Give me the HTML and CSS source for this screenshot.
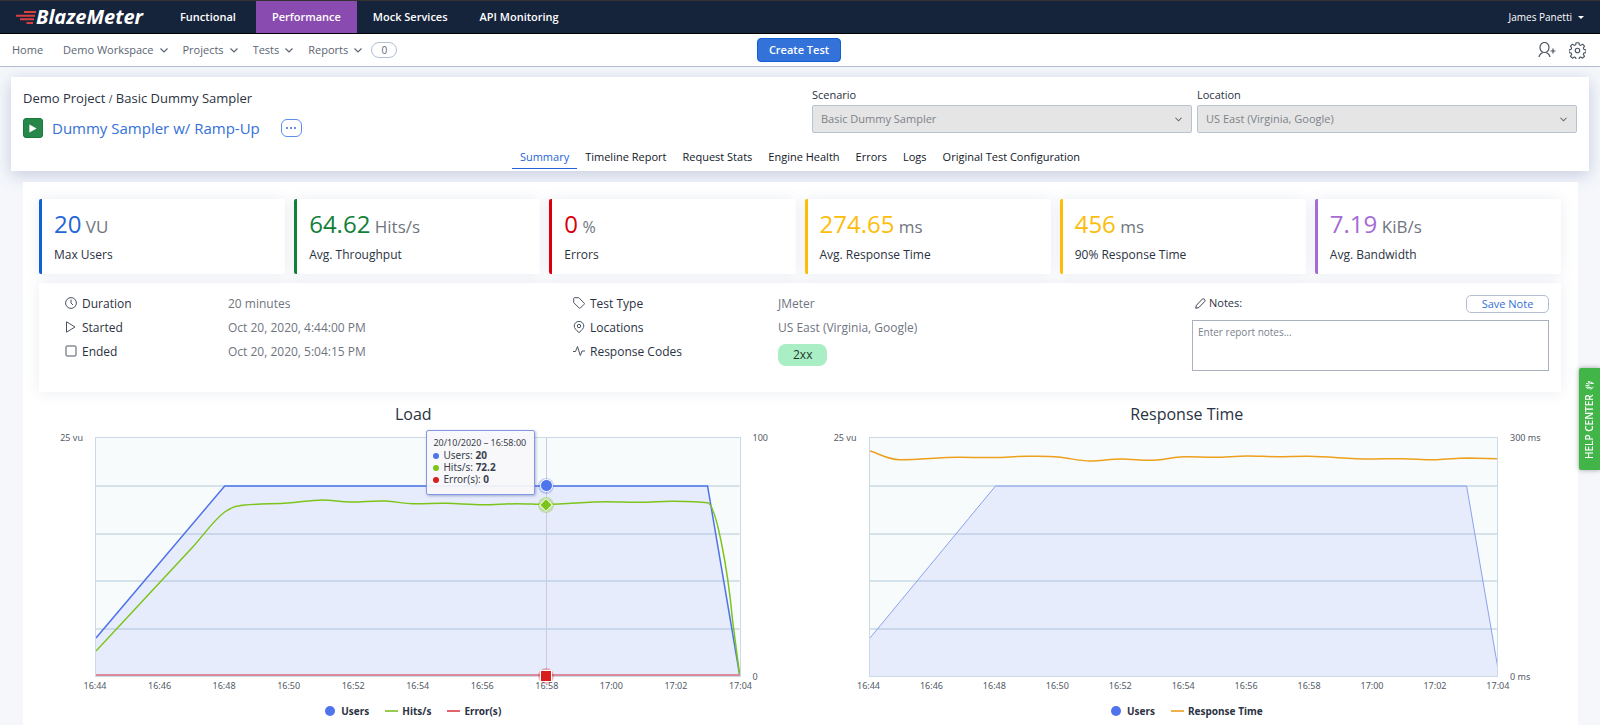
FILE: index.html
```html
<!DOCTYPE html>
<html lang="en">
<head>
    <meta charset="UTF-8">
    <meta name="viewport" content="width=device-width, initial-scale=1.0">
    <title>BlazeMeter - Dummy Sampler w/ Ramp-Up</title>
    <link rel="stylesheet" href="styles.css">
</head>
<body>
    <header class="topbar">
        <a href="#" class="logo">
            <svg class="logo-lines" viewBox="0 0 20 14" aria-hidden="true">
                <path d="M8 2H20M0 5.700H19M4 9.300H18M10.500 13H17" />
            </svg>
            <span>BlazeMeter</span>
        </a>
        <nav class="products">
            <a href="#">Functional</a>
            <a href="#" class="active">Performance</a>
            <a href="#">Mock Services</a>
            <a href="#">API Monitoring</a>
        </nav>
        <button class="user-menu" type="button">James Panetti <span class="caret"></span></button>
    </header>

    <div class="subnav">
        <nav class="subnav-links">
            <a href="#" class="home">Home</a>
            <a href="#">Demo Workspace <svg class="chevron" viewBox="0 0 8 5"><path d="M0.5 0.5L4 4L7.5 0.5" /></svg></a>
            <a href="#">Projects <svg class="chevron" viewBox="0 0 8 5"><path d="M0.5 0.5L4 4L7.5 0.5" /></svg></a>
            <a href="#">Tests <svg class="chevron" viewBox="0 0 8 5"><path d="M0.5 0.5L4 4L7.5 0.5" /></svg></a>
            <a href="#">Reports <svg class="chevron" viewBox="0 0 8 5"><path d="M0.5 0.5L4 4L7.5 0.5" /></svg></a>
            <span class="count">0</span>
        </nav>
        <button class="create-test" type="button">Create Test</button>
        <div class="subnav-tools">
            <button class="icon-button" type="button" aria-label="Invite user">
                <svg class="icon-invite" viewBox="0 0 18 16">
                    <ellipse cx="6.5" cy="5.5" rx="4.5" ry="5" />
                    <path d="M1 15C1.3 12.6 2.6 11.6 4.6 10.8M12 15C11.7 12.6 10.4 11.6 8.4 10.8M12.5 9H17.5M15 6.5V11.5" />
                </svg>
            </button>
            <button class="icon-button" type="button" aria-label="Settings">
                <svg class="icon-gear" viewBox="0 0 24 24">
                    <circle cx="12" cy="12" r="3.2" />
                    <path d="M10 1.5h4l.6 3 1.9.8 2.6-1.7 2.8 2.8-1.7 2.6.8 1.9 3 .6v4l-3 .6-.8 1.9 1.7 2.6-2.8 2.8-2.6-1.7-1.9.8-.6 3h-4l-.6-3-1.9-.8-2.6 1.7-2.8-2.8 1.7-2.6-.8-1.9-3-.6v-4l3-.6.8-1.9-1.7-2.6 2.8-2.8 2.6 1.7 1.9-.8z" transform="translate(0 -0.5)" />
                </svg>
            </button>
        </div>
    </div>

    <section class="report-header">
        <div class="report-top">
            <div class="report-name">
                <p class="breadcrumb"><a href="#">Demo Project</a> <small>/</small> <a href="#">Basic Dummy Sampler</a></p>
                <div class="title-row">
                    <button class="run" type="button" aria-label="Run test">
                        <svg viewBox="0 0 10 10"><path d="M0.5 0L9.5 5L0.5 10Z" /></svg>
                    </button>
                    <h1>Dummy Sampler w/ Ramp-Up</h1>
                    <button class="more" type="button" aria-label="More actions"><i></i><i></i><i></i></button>
                </div>
            </div>
            <div class="filters">
                <div class="filter">
                    <label for="scenario">Scenario</label>
                    <div class="select-box">
                        <select id="scenario" disabled><option>Basic Dummy Sampler</option></select>
                        <svg class="chevron" viewBox="0 0 8 5"><path d="M0.5 0.5L4 4L7.5 0.5" /></svg>
                    </div>
                </div>
                <div class="filter">
                    <label for="location">Location</label>
                    <div class="select-box">
                        <select id="location" disabled><option>US East (Virginia, Google)</option></select>
                        <svg class="chevron" viewBox="0 0 8 5"><path d="M0.5 0.5L4 4L7.5 0.5" /></svg>
                    </div>
                </div>
            </div>
        </div>
        <nav class="tabs">
            <a href="#" class="active">Summary</a>
            <a href="#">Timeline Report</a>
            <a href="#">Request Stats</a>
            <a href="#">Engine Health</a>
            <a href="#">Errors</a>
            <a href="#">Logs</a>
            <a href="#">Original Test Configuration</a>
        </nav>
    </section>

    <main class="report">
        <div class="stats">
            <div class="stat-box blue">
                <p class="value"><b>20</b> VU</p>
                <p class="label">Max Users</p>
            </div>
            <div class="stat-box green">
                <p class="value"><b>64.62</b> Hits/s</p>
                <p class="label">Avg. Throughput</p>
            </div>
            <div class="stat-box red">
                <p class="value"><b>0</b> <small>%</small></p>
                <p class="label">Errors</p>
            </div>
            <div class="stat-box yellow">
                <p class="value"><b>274.65</b> ms</p>
                <p class="label">Avg. Response Time</p>
            </div>
            <div class="stat-box yellow">
                <p class="value"><b>456</b> ms</p>
                <p class="label">90% Response Time</p>
            </div>
            <div class="stat-box purple">
                <p class="value"><b>7.19</b> KiB/s</p>
                <p class="label">Avg. Bandwidth</p>
            </div>
        </div>

        <div class="details">
            <dl class="times">
                <dt><svg viewBox="0 0 12 12"><circle cx="6" cy="6" r="5.4" /><path d="M6 2.6V6L8 8" /></svg>Duration</dt>
                <dd>20 minutes</dd>
                <dt><svg viewBox="0 0 12 12"><path d="M1.5 0.8L10 6L1.5 11.2Z" /></svg>Started</dt>
                <dd>Oct 20, 2020, 4:44:00 PM</dd>
                <dt><svg viewBox="0 0 12 12"><rect x="1" y="1" width="10" height="10" rx="1" /></svg>Ended</dt>
                <dd>Oct 20, 2020, 5:04:15 PM</dd>
            </dl>
            <dl class="setup">
                <dt><svg viewBox="0 0 12 12"><path d="M0.7 1.4L1.3 0.7H5.8L11.4 6.3Q11.6 6.8 11.2 7.2L7.3 11.1Q6.7 11.5 6.2 11.1L0.7 5.6Z" /></svg>Test Type</dt>
                <dd>JMeter</dd>
                <dt><svg viewBox="0 0 12 12"><path d="M6 11.6C3 9 1.2 7.2 1.2 5A4.8 4.6 0 0 1 10.8 5C10.8 7.2 9 9 6 11.6Z" /><circle cx="6" cy="5" r="1.7" /></svg>Locations</dt>
                <dd>US East (Virginia, Google)</dd>
                <dt><svg viewBox="0 0 12 12"><path d="M0 6.5H2.5L4.5 1.5L7.3 10.5L9 6H12" /></svg>Response Codes</dt>
                <dd><span class="code">2xx</span></dd>
            </dl>
            <div class="notes">
                <div class="notes-head">
                    <label for="notes">
                        <svg viewBox="0 0 12 12"><path d="M0.8 11.2L1.5 8L8 1.2Q9 0.3 10.2 1.3Q11.6 2.6 10.6 3.8L4.2 10.4Z" /></svg>Notes:
                    </label>
                    <button class="save-note" type="button">Save Note</button>
                </div>
                <textarea id="notes" placeholder="Enter report notes..."></textarea>
            </div>
        </div>

        <div class="charts">
            <section class="chart">
                <h2>Load</h2>
                <div class="chart-body load">
                    <div class="axis left"><span>25 vu</span></div>
                    <div class="plot">
                        <svg class="series" viewBox="0 0 645 238" preserveAspectRatio="none">
                            <path class="grid" d="M0 48H645M0 96H645M0 143H645M0 191H645" />
                            <path class="users-area" d="M0 200L129 48H613L645 226V238H0Z" />
                            <path class="users-line" d="M0 200L129 48H613L645 236" />
                            <path class="hits-line" d="M0 213C32 179 65 143 97 109C108 97 118 82 129 74C135 70 139 68 143 68C150 66 178 66 192 65C204 64.500 214 62 227 62C238 62 244 64 255 64C268 64 279 62.500 290 63C302 63.500 306 65.500 318 65.700C330 66 340 65 352 65.300C364 65.600 376 66.700 388 66.700C400 66.700 410 65.700 422 65.700C432 65.700 441 66.300 451 66.300C473 66.300 490 63.700 512 63.700C524 63.700 533 64.300 545 64.300C558 64.300 568 63 580 63.300C592 63.500 606 64 613 64.700C621 66 633 128 638 182L645 236" />
                        </svg>
                        <div class="errors-line"></div>
                        <div class="crosshair">
                            <i class="point users"></i>
                            <i class="point hits"></i>
                            <i class="point errors"></i>
                        </div>
                        <div class="tooltip">
                            <p class="date">20/10/2020 – 16:58:00</p>
                            <p><i class="dot blue"></i>Users: <b>20</b></p>
                            <p><i class="dot green"></i>Hits/s: <b>72.2</b></p>
                            <p><i class="dot red"></i>Error(s): <b>0</b></p>
                        </div>
                    </div>
                    <div class="axis right"><span>100</span><span>0</span></div>
                    <div class="times-axis">
                        <span>16:44</span><span>16:46</span><span>16:48</span><span>16:50</span><span>16:52</span><span>16:54</span><span>16:56</span><span>16:58</span><span>17:00</span><span>17:02</span><span>17:04</span>
                    </div>
                </div>
                <div class="legend">
                    <span><i class="key-dot"></i>Users</span>
                    <span><i class="key-line green"></i>Hits/s</span>
                    <span><i class="key-line red"></i>Error(s)</span>
                </div>
            </section>

            <section class="chart">
                <h2>Response Time</h2>
                <div class="chart-body response">
                    <div class="axis left"><span>25 vu</span></div>
                    <div class="plot">
                        <svg class="series" viewBox="0 0 630 238" preserveAspectRatio="none">
                            <path class="grid" d="M0 48H630M0 96H630M0 143H630M0 191H630" />
                            <path class="users-area" d="M0 200L126 48H599L630 228V238H0Z" />
                            <path class="users-line thin" d="M0 200L126 48H599L630 228" />
                            <path class="response-line" d="M0 13C10 16 18 21.700 30 21.700C52 21.700 68 19.300 90 19.300C102 19.300 113 19.700 125 19.500C137 19.300 147 18.300 159 18.300C170 18.300 179 18 189 19C200 20 210 23 221 23C232 23 241 21 252 21C264 21 274 22.800 285 22.300C296 21.800 304 19 315 18.700C326 18.400 336 19.500 347 19.300C358 19.100 368 18 379 18C390 18 398 18.700 409 18.700C420 18.700 429 18.200 440 18.300C462 18.500 480 21 502 21C514 21 523 20.500 535 20.700C547 20.900 557 21.900 569 21.700C580 21.500 588 20.200 599 20L630 20.700" />
                        </svg>
                    </div>
                    <div class="axis right"><span>300 ms</span><span>0 ms</span></div>
                    <div class="times-axis">
                        <span>16:44</span><span>16:46</span><span>16:48</span><span>16:50</span><span>16:52</span><span>16:54</span><span>16:56</span><span>16:58</span><span>17:00</span><span>17:02</span><span>17:04</span>
                    </div>
                </div>
                <div class="legend">
                    <span><i class="key-dot"></i>Users</span>
                    <span><i class="key-line orange"></i>Response Time</span>
                </div>
            </section>
        </div>
    </main>

    <button class="help-center" type="button">
        HELP CENTER
        <svg viewBox="0 0 10 10" aria-hidden="true"><path d="M3.300 9.500L0.800 6.200L1.600 5.600L3 6.800L1.800 2M3.200 5L3.200 0.800M5 4.800V0.500M6.500 5L7.300 1.200M7.300 6L9.200 3.200L9 6L7.200 9.500Z" /></svg>
    </button>
</body>
</html>
```

FILE: styles.css
```css
* {
    box-sizing: border-box;
}
body {
    font-family: 'Open Sans', sans-serif;
    font-size: 12px;
    line-height: 16px;
    margin: 0;
    min-height: 100vh;
    display: flex;
    flex-direction: column;
    background: #f5f7fb;
    color: #2b3242;
}
a {
    color: inherit;
    text-decoration: none;
}
p, h1, h2, dl, dd {
    margin: 0;
}
button, select, textarea {
    font: inherit;
}
button {
    cursor: pointer;
    padding: 0;
}
svg {
    fill: none;
    stroke: currentColor;
}
.chevron {
    width: 8px;
    height: 5px;
    overflow: visible;
    stroke-width: 1.2;
}

/* Top bar */
.topbar {
    display: flex;
    height: 34px;
    background: #15233b;
    border-top: 1px solid #333;
    border-bottom: 1px solid #000;
    color: white;
}
.logo {
    display: flex;
    align-items: center;
    width: 164px;
    padding-left: 16px;
    font-size: 20px;
    font-weight: 700;
    font-style: italic;
}
.logo-lines {
    width: 20px;
    height: 14px;
    stroke: #d9403f;
    stroke-width: 2;
}
.products {
    display: flex;
    flex: 1;
    font-size: 11px;
    font-weight: 600;
}
.products a {
    display: flex;
    align-items: center;
    padding: 0 16px;
}
.products a:first-child {
    margin-right: 4px;
}
.products .active {
    background: #8a4bb0;
}
.user-menu {
    display: flex;
    align-items: center;
    gap: 6px;
    margin-right: 16px;
    background: none;
    border: none;
    color: white;
    font-size: 10px;
    font-weight: 500;
}
.caret {
    border: 3px solid transparent;
    border-top-color: white;
    border-bottom: none;
}

/* Workspace navigation */
.subnav {
    display: grid;
    grid-template-columns: 1fr auto 1fr;
    align-items: center;
    height: 33px;
    padding: 0 14px 0 12px;
    background: white;
    border-bottom: 1px solid #b3bed0;
    color: #5b6573;
    font-size: 11px;
}
.subnav-links {
    display: flex;
    align-items: center;
    gap: 15px;
    font-weight: 500;
}
.subnav-links a {
    display: flex;
    align-items: center;
    gap: 6px;
}
.subnav-links .home {
    margin-right: 5px;
}
.count {
    width: 26px;
    height: 16px;
    margin-left: -6px;
    border: 1px solid #b3bed0;
    border-radius: 8px;
    font-size: 10px;
    line-height: 14px;
    text-align: center;
}
.create-test {
    width: 84px;
    height: 24px;
    background: #3272d9;
    border: 1px solid #0f5fd8;
    border-radius: 4px;
    color: white;
    font-weight: 600;
}
.subnav-tools {
    display: flex;
    justify-content: flex-end;
    align-items: center;
    gap: 13px;
}
.icon-button {
    display: flex;
    background: none;
    border: none;
    color: #4a5462;
}
.icon-invite {
    width: 18px;
    height: 16px;
    stroke-width: 1.2;
}
.icon-gear {
    width: 17px;
    height: 17px;
    stroke-width: 1.6;
    stroke-linejoin: round;
}

/* Report header */
.report-header {
    margin: 10px 11px 0;
    padding: 10px 12px 0;
    background: white;
    box-shadow: 0 4px 16px rgba(60, 80, 140, 0.25);
}
.report-top {
    display: flex;
    justify-content: space-between;
}
.breadcrumb {
    margin-top: 3px;
    font-size: 13px;
}
.breadcrumb small {
    font-size: 10px;
}
.title-row {
    display: flex;
    align-items: center;
    margin-top: 11px;
}
.run {
    display: flex;
    align-items: center;
    justify-content: center;
    width: 20px;
    height: 20px;
    margin-right: 9px;
    background: #27874a;
    border: 1px solid #167a3a;
    border-radius: 3px;
}
.run svg {
    width: 8px;
    height: 9px;
    fill: white;
    stroke: none;
}
h1 {
    font-size: 15px;
    line-height: 20px;
    font-weight: 400;
    color: #3470d8;
}
.more {
    display: flex;
    align-items: center;
    justify-content: center;
    gap: 2px;
    width: 21px;
    height: 18px;
    margin-left: 21px;
    background: white;
    border: 1px solid #5f8fe6;
    border-radius: 6px;
}
.more i {
    width: 2px;
    height: 2px;
    border-radius: 50%;
    background: #3470d8;
}
.filters {
    display: flex;
    gap: 5px;
    width: calc(50% - 12px);
}
.filter {
    flex: 1;
    font-size: 11px;
}
.filter label {
    display: block;
    margin-bottom: 2px;
}
.select-box {
    position: relative;
}
.select-box select {
    display: block;
    width: 100%;
    height: 28px;
    padding: 0 8px;
    appearance: none;
    background: #e5e5e5;
    border: 1px solid #b9c4d2;
    border-radius: 2px;
    color: #7d8289;
    opacity: 1;
}
.select-box .chevron {
    position: absolute;
    right: 10px;
    top: 12px;
    width: 7px;
    color: #5b6573;
}
.tabs {
    display: flex;
    justify-content: center;
    margin-top: 6px;
    padding-bottom: 2px;
    font-size: 11px;
    font-weight: 500;
    color: #111827;
}
.tabs a {
    padding: 5px 8px 3px;
    border-bottom: 1px solid transparent;
}
.tabs .active {
    color: #2466d8;
    border-color: #2466d8;
}

/* Report body */
.report {
    flex: 1;
    margin: 11px 22px 0 23px;
    padding: 17px 17px 0 16px;
    background: white;
}
.stats {
    display: grid;
    grid-template-columns: repeat(6, 1fr);
    gap: 9px;
}
.stat-box {
    height: 75px;
    padding: 12px;
    background: white;
    border-left: 3px solid;
    border-radius: 2px;
    box-shadow: 0 0 14px rgba(60, 80, 140, 0.1);
}
.stat-box .value {
    font-size: 17px;
    line-height: 26px;
    color: #6f7580;
}
.stat-box .value b {
    font-size: 24px;
    font-weight: 400;
}
.stat-box .value small {
    font-size: 16px;
    line-height: 16px;
}
.stat-box .label {
    margin-top: 7px;
    color: #2b3242;
}
.stat-box.blue {
    border-color: #0f5fd8;
}
.stat-box.blue b {
    color: #2466d8;
}
.stat-box.green {
    border-color: #117f38;
}
.stat-box.green b {
    color: #117f38;
}
.stat-box.red {
    border-color: #d9000a;
}
.stat-box.red b {
    color: #d9000a;
}
.stat-box.yellow {
    border-color: #fbbd08;
}
.stat-box.yellow b {
    color: #fbbd08;
}
.stat-box.purple {
    border-color: #a56bd6;
}
.stat-box.purple b {
    color: #a56bd6;
}

.details {
    display: flex;
    height: 109px;
    margin-top: 9px;
    padding: 12px 12px 0 26px;
    background: white;
    box-shadow: 0 0 14px rgba(60, 80, 140, 0.1);
}
.details dl {
    display: grid;
    align-content: start;
    grid-auto-rows: 24px;
    line-height: 18px;
}
.details dt {
    display: flex;
    gap: 5px;
}
.details dt svg {
    width: 12px;
    height: 12px;
    margin-top: 2px;
    color: #4a5462;
}
.details dd {
    color: #6f7580;
}
.details .times {
    width: 508px;
    grid-template-columns: 163px 1fr;
}
.details .setup {
    flex: 1;
    grid-template-columns: 205px 1fr;
}
.code {
    display: inline-block;
    padding: 2px 15px;
    margin-top: 1px;
    background: #a9eec4;
    border-radius: 8px;
    color: #1f3a2c;
}
.notes {
    width: 357px;
}
.notes-head {
    display: flex;
    justify-content: space-between;
    height: 25px;
    padding-left: 3px;
}
.notes-head label {
    display: flex;
    gap: 3px;
    font-size: 11px;
}
.notes-head label svg {
    width: 11px;
    height: 11px;
    margin-top: 3px;
}
.save-note {
    width: 83px;
    height: 18px;
    background: white;
    border: 1px solid #b3bed0;
    border-radius: 5px;
    color: #3470d8;
    font-size: 11px;
    line-height: 16px;
}
.notes textarea {
    display: block;
    width: 100%;
    height: 51px;
    padding: 3px 5px;
    border: 1px solid #a9b1be;
    resize: none;
    font-size: 10px;
}
.notes textarea::placeholder {
    color: #7a828e;
}

/* Charts */
.charts {
    display: flex;
    gap: 25px;
    padding-top: 11px;
}
.chart {
    flex: 1;
    padding-bottom: 4px;
}
.chart h2 {
    margin-bottom: 12px;
    font-size: 16px;
    line-height: 22px;
    font-weight: 400;
    text-align: center;
}
.chart-body {
    display: grid;
    grid-template-rows: 240px 20px;
    font-family: 'Noto Sans', sans-serif;
    font-size: 9px;
    color: #525a66;
}
.chart-body.load {
    grid-template-columns: 56px 1fr 47px;
}
.chart-body.response {
    grid-template-columns: 56px 1fr 63px;
}
.axis {
    display: flex;
    flex-direction: column;
    justify-content: space-between;
    margin: -7px 0 -8px;
}
.axis.left {
    align-items: flex-end;
    padding-right: 12px;
}
.axis.right {
    padding-left: 12px;
}
.plot {
    position: relative;
    border: 1px solid #cbdae6;
    background: #f8fbfc;
}
.series {
    display: block;
    position: absolute;
    width: 100%;
    height: 100%;
}
.series path {
    vector-effect: non-scaling-stroke;
}
.grid {
    stroke: #d6e2ea;
    stroke-width: 2;
}
.users-area {
    fill: rgba(90, 110, 255, 0.1);
    stroke: none;
}
.users-line {
    stroke: #4f74e8;
    stroke-width: 1.5;
}
.users-line.thin {
    stroke: #8aa2ef;
    stroke-width: 1;
}
.hits-line {
    stroke: #7cc41a;
    stroke-width: 1.5;
}
.response-line {
    stroke: #eca01c;
    stroke-width: 1.5;
}
.errors-line {
    position: absolute;
    left: 0;
    right: 0;
    bottom: 0;
    height: 2px;
    background: #dd8a9a;
}
.crosshair {
    position: absolute;
    left: 70%;
    top: 0;
    bottom: 0;
    width: 1px;
    background: #c9cddb;
}
.point {
    position: absolute;
    left: -8px;
    width: 16px;
    height: 16px;
    margin-top: -8px;
    border-radius: 50%;
    display: flex;
    align-items: center;
    justify-content: center;
}
.point::after {
    content: '';
    border: 1px solid white;
}
.point.users {
    top: 20%;
    background: rgba(79, 116, 236, 0.3);
}
.point.users::after {
    width: 11px;
    height: 11px;
    border-radius: 50%;
    background: #4f74ec;
}
.point.hits {
    top: 28%;
    background: rgba(124, 196, 26, 0.35);
}
.point.hits::after {
    width: 8px;
    height: 8px;
    background: #7cc41a;
    transform: rotate(45deg);
}
.point.errors {
    top: 100%;
    background: rgba(217, 30, 30, 0.3);
}
.point.errors::after {
    width: 10px;
    height: 10px;
    background: #d91e1e;
}
.tooltip {
    position: absolute;
    right: calc(30% + 11px);
    top: -8px;
    width: 109px;
    height: 65px;
    padding: 6px;
    background: rgba(247, 248, 250, 0.93);
    border: 1px solid #8397e4;
    border-radius: 2px;
    box-shadow: 1px 1px 3px rgba(60, 80, 140, 0.4);
    font-size: 10px;
    line-height: 12px;
    white-space: nowrap;
    color: #3a414d;
}
.tooltip .date {
    font-size: 9px;
}
.dot {
    display: inline-block;
    width: 6px;
    height: 6px;
    margin-right: 4px;
    border-radius: 50%;
}
.dot.blue {
    background: #4f74ec;
}
.dot.green {
    background: #7cc41a;
}
.dot.red {
    background: #d91e1e;
}
.times-axis {
    grid-column: 2;
    display: flex;
    justify-content: space-between;
    margin: 0 -20px;
    padding-top: 1px;
}
.times-axis span {
    width: 40px;
    text-align: center;
}
.legend {
    display: flex;
    justify-content: center;
    gap: 16px;
    margin-top: 6px;
    font-family: 'Noto Sans', sans-serif;
    font-size: 10px;
    font-weight: 700;
}
.legend span {
    display: flex;
    align-items: center;
}
.key-dot {
    width: 10px;
    height: 10px;
    margin-right: 6px;
    border-radius: 50%;
    background: #4f74ec;
}
.key-line {
    width: 13px;
    height: 2px;
    margin-right: 4px;
}
.key-line.green {
    background: #96cb4f;
}
.key-line.red {
    background: #e0636b;
}
.key-line.orange {
    background: #f0b04c;
}

.help-center {
    position: fixed;
    right: 0;
    top: 368px;
    display: flex;
    align-items: center;
    gap: 4px;
    width: 21px;
    height: 102px;
    padding: 11px 0;
    background: #42b549;
    border: none;
    border-radius: 0 2px 2px 0;
    box-shadow: 0 0 5px rgba(0, 0, 0, 0.35);
    color: white;
    font-size: 10px;
    font-weight: 600;
    line-height: 21px;
    white-space: nowrap;
    writing-mode: vertical-rl;
    transform: rotate(180deg);
}
.help-center svg {
    flex: none;
    width: 9px;
    height: 9px;
    transform: rotate(90deg);
}
```
